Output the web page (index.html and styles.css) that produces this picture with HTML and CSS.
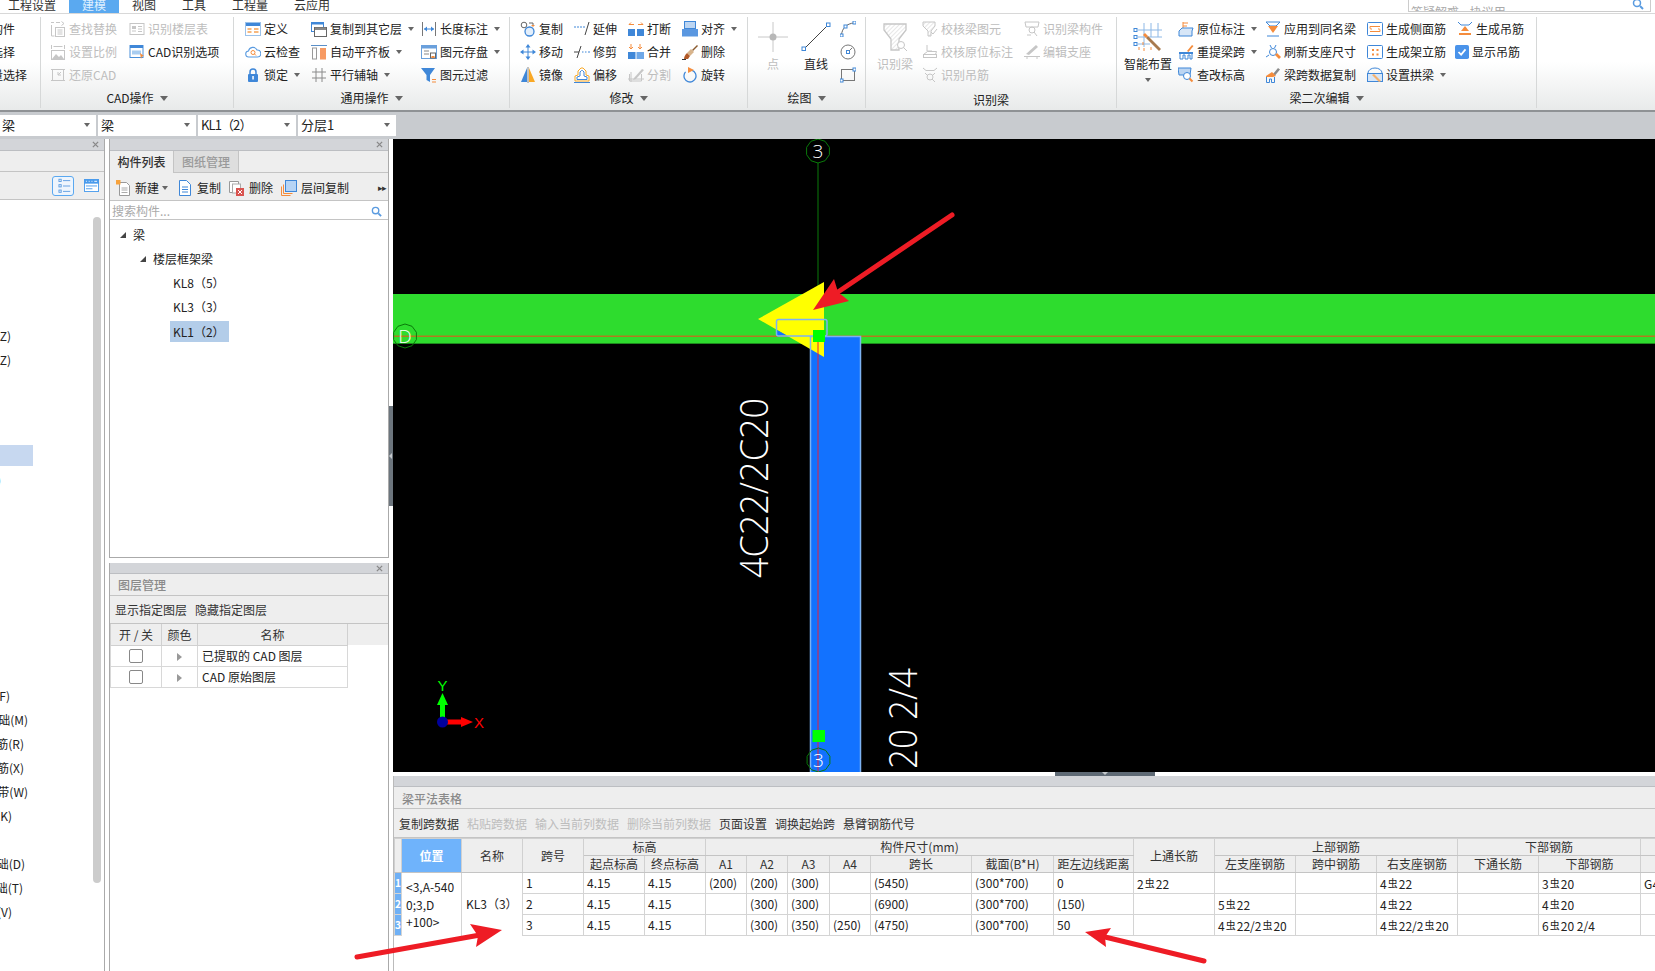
FILE: index.html
```html
<!DOCTYPE html>
<html lang="zh-CN">
<head>
<meta charset="utf-8">
<title>梁平法表格</title>
<link rel="stylesheet" href="styles.css">
</head>
<body>
<svg class="defs" aria-hidden="true">
<defs>
<symbol id="find" viewBox="0 0 16 16"><g fill="none" stroke="#c6c6c6"><path d="M1 1.5h3M6 1.5h4"/><path d="M11.5 .5l2.5 2-2.5 2"/><rect x="5.5" y="6.5" width="9" height="9"/><path d="M7.5 9h5M7.5 11h5M7.5 13h5M1.5 4v11h3"/></g></symbol>
<symbol id="scale" viewBox="0 0 16 16"><g stroke="#c6c6c6" fill="none"><rect x="1.5" y="6.5" width="13" height="9"/><path d="M1.5 1v4M14.5 1v4M3.5 2.5h9"/></g><path d="M2 15l4-5 3 3 2-2 3 4z" fill="#c6c6c6"/></symbol>
<symbol id="restore" viewBox="0 0 16 16"><g stroke="#c6c6c6" fill="none"><rect x="2.5" y="2.5" width="11" height="11"/><path d="M1 2.5h3M12 2.5h3M1 13.5h3M12 13.5h3M11 5l-3 3M8 5v3h3"/></g></symbol>
<symbol id="floor" viewBox="0 0 16 16"><rect x="1" y="2.5" width="14" height="11" fill="#fff" stroke="#c6c6c6"/><rect x="3" y="5" width="4" height="3" fill="#c6c6c6"/><path d="M9 5.500h4M3 10h4M9 8h4M9 10.500h4" stroke="#c6c6c6"/></symbol>
<symbol id="cadopt" viewBox="0 0 16 16"><rect x="1" y="1.500" width="13" height="12" fill="#fff" stroke="#4a90d9"/><rect x="1" y="1" width="13" height="3" fill="#3f87d8"/><rect x="3" y="6.500" width="9" height="4" fill="#a9cdf0"/><path d="M11 9l4 3-2 .5-1 2.500z" fill="#f58c3c"/></symbol>
<symbol id="define" viewBox="0 0 16 16"><rect x=".5" y="1.500" width="15" height="13" fill="#fff" stroke="#9cc2ea"/><rect x="1" y="2" width="14" height="3" fill="#3f87d8"/><path d="M2.500 8h4M2.500 11h4" stroke="#f5a154" stroke-width="1.500"/><path d="M9 8h4.500M9 11h4.500" stroke="#f5a154" stroke-width="1.500"/></symbol>
<symbol id="cloud" viewBox="0 0 16 16"><path d="M4 13a3 3 0 0 1-.5-6A4.500 4.500 0 0 1 12 6a3.500 3.500 0 0 1 .5 7z" fill="#fff" stroke="#5a9be0" stroke-width="1.100"/><circle cx="8" cy="8.500" r="2" fill="none" stroke="#f58c3c"/><path d="M9.500 10l1.500 1.500" stroke="#f58c3c"/></symbol>
<symbol id="lock" viewBox="0 0 16 16"><path d="M5 7V5a3 3 0 0 1 6 0v2" fill="none" stroke="#3f87d8" stroke-width="1.500"/><rect x="3" y="7" width="10" height="8" rx="1" fill="#3f87d8"/><rect x="7.300" y="9" width="1.500" height="3.500" fill="#fff"/></symbol>
<symbol id="copyfloor" viewBox="0 0 16 16"><rect x=".5" y="1.500" width="12" height="9" fill="#fff" stroke="#3f87d8"/><rect x="1" y="1" width="12" height="2.500" fill="#3f87d8"/><rect x="3.500" y="6.500" width="12" height="9" fill="#fff" stroke="#666"/><rect x="4" y="6.500" width="11" height="2.500" fill="#888"/></symbol>
<symbol id="alignb" viewBox="0 0 16 16"><path d="M0 1.500h16" stroke="#5a8fc8"/><rect x="1.500" y="4" width="4" height="11" fill="#fff" stroke="#999"/><rect x="9" y="4" width="6" height="11.500" fill="#f79a63"/></symbol>
<symbol id="par" viewBox="0 0 16 16"><path d="M1 5h14M1 11h14M5 1v14M11 1v14" stroke="#8a8a8a" stroke-width="1" fill="none"/></symbol>
<symbol id="measure" viewBox="0 0 16 16"><path d="M1.500 1v14M14.500 1v14" stroke="#777"/><path d="M3 8h10" stroke="#3f87d8"/><path d="M3 8l3-2.500v5zM13 8l-3-2.500v5z" fill="#3f87d8"/></symbol>
<symbol id="save" viewBox="0 0 16 16"><rect x=".5" y="1.500" width="15" height="13" fill="#fff" stroke="#6aa0dc"/><rect x="1" y="2" width="14" height="2.500" fill="#6aa0dc"/><path d="M3 7h5M3 10h5" stroke="#888"/><rect x="9.500" y="9" width="5" height="5" fill="#fff" stroke="#666"/><rect x="10.500" y="12" width="3" height="2" fill="#f58c3c"/></symbol>
<symbol id="filter" viewBox="0 0 16 16"><path d="M0 1h14L9 8v7L5.500 13V8z" fill="#3f87d8"/><path d="M11 12.500h4M11 15h4" stroke="#f58c3c"/></symbol>
<symbol id="copy" viewBox="0 0 16 16"><circle cx="4" cy="4" r="2.800" fill="#fff" stroke="#666"/><path d="M9 2h4v3" fill="none" stroke="#666"/><path d="M13 6l-2-2h4z" fill="#f58c3c"/><circle cx="9.500" cy="10.500" r="4.500" fill="#e4effb" stroke="#3f87d8" stroke-width="1.300"/></symbol>
<symbol id="move" viewBox="0 0 16 16"><path d="M8 3v10M3 8h10" stroke="#3f87d8"/><path d="M8 0l2.500 3.500h-5zM8 16l2.500-3.500h-5zM0 8l3.500-2.500v5zM16 8l-3.500-2.500v5z" fill="#3f87d8"/></symbol>
<symbol id="mirror" viewBox="0 0 16 16"><path d="M7 1v14H1z" fill="#3f87d8"/><path d="M9 1v14h6z" fill="#f9a825"/><path d="M8 0v16" stroke="#888"/></symbol>
<symbol id="extend" viewBox="0 0 16 16"><path d="M0 6h2M3 6h2M6 6h2M9 6h2" stroke="#3f87d8"/><path d="M11 14L15 1" stroke="#444" fill="none"/></symbol>
<symbol id="trim" viewBox="0 0 16 16"><path d="M0 8h5" stroke="#444"/><path d="M8 8h1.500M11 8h1.500M14 8h2" stroke="#3f87d8"/><path d="M3 14L7 2" stroke="#444"/></symbol>
<symbol id="offset" viewBox="0 0 16 16"><path d="M1 14V9l3-1V4l3-3h2l3 3v4l3 1v5z" fill="#fff" stroke="#f9a825"/><path d="M3 12.500V10l3-1V5l1.500-1.500h1L10 5v4l3 1v2.500z" fill="#fff" stroke="#3f87d8"/><path d="M0 15.500h16" stroke="#3f87d8"/></symbol>
<symbol id="break" viewBox="0 0 16 16"><rect x="0" y="8" width="7" height="7" fill="#3f87d8"/><rect x="9" y="8" width="7" height="7" fill="#3f87d8"/><path d="M1 3.500h5M1 3.500l2-2M10 3.500h5M15 3.500l-2-2" stroke="#f58c3c" fill="none"/></symbol>
<symbol id="merge" viewBox="0 0 16 16"><rect x="0" y="8" width="7.500" height="7" fill="#3f87d8"/><rect x="8.500" y="8" width="7.500" height="7" fill="#6ea8e8"/><path d="M3 0v5M1 3l2 2 2-2M12 0v5M10 3l2 2 2-2" stroke="#f58c3c" fill="none"/></symbol>
<symbol id="split" viewBox="0 0 16 16"><g fill="none" stroke="#c6c6c6"><path d="M1.500 7v7h12V7"/><path d="M0 12h16M3 15V5"/></g><path d="M6 11l8-9 2 1-8 9-3 1z" fill="#c6c6c6"/></symbol>
<symbol id="alignt" viewBox="0 0 16 16"><rect x="2.500" y=".5" width="11" height="7" fill="#bcd5f2" stroke="#3f87d8"/><rect x="0" y="8" width="16" height="7.500" fill="#5a97e0"/></symbol>
<symbol id="del" viewBox="0 0 16 16"><path d="M10 6l5-5 1 1-5 5z" fill="#8a5a2e"/><path d="M9 5l3 3-4 4-3-3z" fill="#d8b48c"/><path d="M5 9l3 3-2 3H2c0-2 1-4 3-6z" fill="#b35a28"/><path d="M0 15.500h4" stroke="#333"/></symbol>
<symbol id="rotate" viewBox="0 0 16 16"><circle cx="8" cy="9" r="6" fill="none" stroke="#3f87d8" stroke-width="1.300" stroke-dasharray="30 4" transform="rotate(-70 8 9)"/><path d="M6 0l6 3-6 3z" fill="#f58c3c"/></symbol>
<symbol id="point" viewBox="0 0 30 30"><path d="M15 0v30M0 15h30" stroke="#c8c8c8" fill="none"/><circle cx="15" cy="15" r="3.500" fill="#b8b8b8"/></symbol>
<symbol id="line" viewBox="0 0 30 30"><path d="M3 27L27 3" stroke="#444"/><rect x="1" y="25" width="3.500" height="3.500" fill="#fff" stroke="#3f87d8"/><rect x="25.500" y="1" width="3.500" height="3.500" fill="#fff" stroke="#3f87d8"/></symbol>
<symbol id="arc" viewBox="0 0 16 16"><path d="M1.500 14C2 7 7 2.500 14 2" fill="none" stroke="#666"/><rect x="0" y="13" width="3" height="3" fill="#fff" stroke="#3f87d8"/><rect x="13" y="0" width="3" height="3" fill="#fff" stroke="#3f87d8"/><rect x="4" y="4" width="3" height="3" fill="#fff" stroke="#3f87d8"/></symbol>
<symbol id="circ" viewBox="0 0 16 16"><circle cx="8" cy="8" r="7" fill="none" stroke="#777"/><rect x="6.500" y="6.500" width="3" height="3" fill="#fff" stroke="#3f87d8"/><path d="M9 7l3-3" stroke="#777"/></symbol>
<symbol id="rect" viewBox="0 0 16 16"><rect x="1.500" y="2.500" width="13" height="11" fill="none" stroke="#777"/><rect x="0" y="12" width="3" height="3" fill="#fff" stroke="#3f87d8"/><rect x="13" y="1" width="3" height="3" fill="#fff" stroke="#3f87d8"/></symbol>
<symbol id="rbeam" viewBox="0 0 30 30"><defs><pattern id="hatch" width="3" height="3" patternUnits="userSpaceOnUse" patternTransform="rotate(-45)"><path d="M0 0h3" stroke="#d0d0d0"/></pattern></defs><path d="M4 2h22v6l-7 9v11h-8V17L4 8z" fill="url(#hatch)" stroke="#c6c6c6" stroke-width="1.300"/><circle cx="21" cy="23" r="3.500" fill="#fff" stroke="#c6c6c6"/><path d="M23.500 25.500L27 29" stroke="#c6c6c6"/></symbol>
<symbol id="chk" viewBox="0 0 16 16"><path d="M1 1h12v4l-4 5v5H6V10L1 5z" fill="url(#hatch)" stroke="#c6c6c6"/><path d="M9 11l2 2 4-5" fill="none" stroke="#c6c6c6"/></symbol>
<symbol id="chk2" viewBox="0 0 16 16"><g fill="none" stroke="#c6c6c6"><path d="M5 1v6h5"/><rect x="1.500" y="10.500" width="13" height="3"/><path d="M1.500 10.500l4-3h9l-1 3"/></g></symbol>
<symbol id="hang" viewBox="0 0 16 16"><g fill="none" stroke="#c6c6c6"><path d="M1 1l3 2.500h8L15 1M3 6l2 2M13 6l-2 2"/><circle cx="8" cy="10" r="3"/><path d="M10 12l3 3"/></g></symbol>
<symbol id="rbar" viewBox="0 0 16 16"><g fill="none" stroke="#c6c6c6"><path d="M1 1h14l-1 5H2z"/><circle cx="8" cy="9" r="3"/><path d="M10 11l3 4"/><path d="M3 14h4"/></g></symbol>
<symbol id="edit" viewBox="0 0 16 16"><path d="M2 10l10-9 2 2L5 11z" fill="#c6c6c6"/><path d="M0 12.500h16M3 15v-2M13 15v-2" stroke="#c6c6c6" fill="none"/></symbol>
<symbol id="smart" viewBox="0 0 30 30"><path d="M5 8h24M5 15h24M5 22h12M11 1v24M18 1v14M25 1v14" stroke="#8db8e6" fill="none"/><rect x="1" y="6.500" width="3" height="3" fill="#fff" stroke="#3f87d8"/><rect x="1" y="13.500" width="3" height="3" fill="#fff" stroke="#3f87d8"/><rect x="1" y="20.500" width="3" height="3" fill="#fff" stroke="#3f87d8"/><path d="M15 14l13 13-2 2-13-13z" fill="#a87a4e"/><path d="M12 11l3 3-2 2-3-3z" fill="#f58c3c"/><path d="M10 20v3M6 25v3M18 25v3M11 26v3" stroke="#f58c3c"/></symbol>
<symbol id="orig" viewBox="0 0 16 16"><path d="M5 1v7M5 2h5M5 5h4" stroke="#f58c3c" fill="none"/><path d="M1 10l3-3h11l-1 3v5H1z" fill="#d7e6f7" stroke="#3f87d8"/></symbol>
<symbol id="respan" viewBox="0 0 16 16"><path d="M9 7l5-6 1.500 1-5 6z" fill="#f58c3c"/><path d="M1 8h14v2H1z" fill="#3f87d8"/><path d="M2 10v5h3v-4h2v4h3v-4h2v4h2v-5" fill="none" stroke="#3f87d8"/></symbol>
<symbol id="elev" viewBox="0 0 16 16"><path d="M0 1h13l-1 7H1z" fill="#bcd5f2" stroke="#3f87d8"/><circle cx="9" cy="9" r="3.500" fill="#fff" stroke="#3f87d8"/><path d="M11.500 11.500l3 3" stroke="#f58c3c" stroke-width="2"/></symbol>
<symbol id="same" viewBox="0 0 16 16"><path d="M1 1h14l-4 4H5z" fill="#fff" stroke="#3f87d8"/><path d="M3 5h10l-5 7z" fill="#f58c3c"/><path d="M2 15h12" stroke="#3f87d8"/></symbol>
<symbol id="refresh" viewBox="0 0 16 16"><g fill="none" stroke="#3f87d8"><circle cx="8" cy="8" r="3.500"/><path d="M5 1l1.500 3M11 1L9.500 4M1 13l3-2M15 13l-3-2"/></g><path d="M10 11l4 4 2-2-4-4z" fill="#f58c3c"/></symbol>
<symbol id="span" viewBox="0 0 16 16"><path d="M8 7l5-6 2 1.500-5 6z" fill="#8a8a8a"/><path d="M1 9l6-4 4 4-3 1H1z" fill="#f58c3c"/><path d="M1.500 10v5.500h3V12h2v3.500h3V10" fill="none" stroke="#3f87d8"/></symbol>
<symbol id="side" viewBox="0 0 16 16"><rect x=".5" y="1.500" width="15" height="13" rx="1" fill="#fff" stroke="#3f87d8"/><path d="M3 5.500h10M3 10.500h10M3 5.500c0 2 0 3 2 2.500M13 10.500c0-2 0-3-2-2.500" fill="none" stroke="#f58c3c"/></symbol>
<symbol id="stand" viewBox="0 0 16 16"><rect x=".5" y="1.500" width="15" height="13" rx="1" fill="#fff" stroke="#3f87d8"/><path d="M5 5h2v2H5zM9.500 5h2v2h-2zM5 9.500h2v2H5zM9.500 9.500h2v2h-2z" fill="#f58c3c"/></symbol>
<symbol id="archb" viewBox="0 0 16 16"><path d="M1 6a7 5 0 0 1 14 0" fill="none" stroke="#3f87d8"/><rect x=".5" y="6.500" width="15" height="8" fill="#d7e6f7" stroke="#3f87d8"/><path d="M5 8l7 7 2-1-7-7z" fill="#f5b06c"/></symbol>
<symbol id="genhang" viewBox="0 0 16 16"><path d="M1 1l3 3h8l3-3" fill="none" stroke="#3f87d8"/><path d="M8 5l4 5H4z" fill="#f58c3c"/><path d="M2 13h12" stroke="#f58c3c" stroke-width="2"/></symbol>
<symbol id="checked" viewBox="0 0 16 16"><rect x="0" y="0" width="16" height="16" rx="2" fill="#4a93ea"/><path d="M4 8l3 3 5-6" fill="none" stroke="#fff" stroke-width="2"/></symbol>
<symbol id="listv" viewBox="0 0 22 20"><g fill="none" stroke="#5a9be0"><rect x="6.500" y="2.500" width="2.500" height="2.500"/><rect x="6.500" y="8.500" width="2.500" height="2.500"/><rect x="6.500" y="14.500" width="2.500" height="2.500"/><path d="M11 4h8M11 10h8M11 16h8"/></g></symbol>
<symbol id="cardv" viewBox="0 0 16 14"><rect x=".5" y=".5" width="15" height="13" fill="#fff" stroke="#4a9bec"/><rect x="0" y="0" width="16" height="5" fill="#4a9bec"/><path d="M2 2.500h1M5 2.500h1M8 2.500h1M11 2.500h3" stroke="#fff"/><path d="M2 7.500h12M2 10.500h7" stroke="#4a9bec"/></symbol>
<symbol id="new" viewBox="0 0 16 16"><path d="M3.500 2.500h7l3 3v10h-10z" fill="#fff" stroke="#999"/><path d="M5.500 8h6M5.500 10h6M5.500 12.500h6" stroke="#aaa"/><rect x="0" y="0" width="4.500" height="4.500" fill="#f7a23c"/></symbol>
<symbol id="dup" viewBox="0 0 16 16"><path d="M2.500 .5h7l4 4v11h-11z" fill="#fff" stroke="#3f87d8"/><path d="M5 7h6M5 9.500h6M5 12h6" stroke="#3f87d8"/></symbol>
<symbol id="remove" viewBox="0 0 16 16"><path d="M.5 1.500h9v11h-9z" fill="#fff" stroke="#999"/><rect x="3.500" y="4" width="8" height="9" fill="#fff" stroke="#aaa"/><rect x="7" y="8" width="8" height="8" fill="#d9534f"/><path d="M9 10l4 4M13 10l-4 4" stroke="#fff"/></symbol>
<symbol id="levelcopy" viewBox="0 0 16 16"><path d="M.5 15.500v-9M.5 15.500h9" stroke="#f58c3c" fill="none"/><path d="M2.500 13.500v-9M2.500 13.500h9" stroke="#f58c3c" fill="none"/><rect x="4.500" y=".5" width="11" height="11" fill="#b6d4f5" stroke="#3f87d8"/></symbol>
<symbol id="mag" viewBox="0 0 12 12"><circle cx="5" cy="5" r="3.500" fill="none" stroke="#5a9be0" stroke-width="1.500"/><path d="M8 8l3 3" stroke="#5a9be0" stroke-width="2"/></symbol>
<symbol id="cross" viewBox="0 0 8 8"><path d="M1 1l6 6M7 1L1 7" stroke="#888" stroke-width="1.500"/></symbol>
</defs>
</svg>

<div class="app">
  <nav class="menu">
    <span class="mi">工程设置</span><span class="mi on">建模</span><span class="mi">视图</span><span class="mi">工具</span><span class="mi">工程量</span><span class="mi">云应用</span>
    <div class="topsearch"><span>答疑解惑 协议用</span><svg class="topmag"><use href="#mag"/></svg></div>
  </nav>

  <section class="ribbon">
    <div class="grp g0">
      <div class="body">
        <div class="clip">
          <div class="cl e15"><span>构件</span></div>
          <div class="cl e15"><span>选择</span></div>
          <div class="cl e27"><span>批量选择</span></div>
        </div>
      </div>
    </div>

    <div class="grp g1">
      <div class="body"><div class="cols">
        <div class="it off"><svg class="ic"><use href="#find"/></svg><span>查找替换</span></div>
        <div class="it off"><svg class="ic"><use href="#scale"/></svg><span>设置比例</span></div>
        <div class="it off"><svg class="ic"><use href="#restore"/></svg><span>还原CAD</span></div>
        <div class="it off"><svg class="ic"><use href="#floor"/></svg><span>识别楼层表</span></div>
        <div class="it"><svg class="ic"><use href="#cadopt"/></svg><span>CAD识别选项</span></div>
      </div></div>
      <div class="lab">CAD操作<b class="caret big-c"></b></div>
    </div>

    <div class="grp g2">
      <div class="body"><div class="cols">
        <div class="it"><svg class="ic"><use href="#define"/></svg><span>定义</span></div>
        <div class="it"><svg class="ic"><use href="#cloud"/></svg><span>云检查</span></div>
        <div class="it"><svg class="ic"><use href="#lock"/></svg><span>锁定</span><b class="caret"></b></div>
        <div class="it"><svg class="ic"><use href="#copyfloor"/></svg><span>复制到其它层</span><b class="caret"></b></div>
        <div class="it"><svg class="ic"><use href="#alignb"/></svg><span>自动平齐板</span><b class="caret"></b></div>
        <div class="it"><svg class="ic"><use href="#par"/></svg><span>平行辅轴</span><b class="caret"></b></div>
        <div class="it"><svg class="ic"><use href="#measure"/></svg><span>长度标注</span><b class="caret"></b></div>
        <div class="it"><svg class="ic"><use href="#save"/></svg><span>图元存盘</span><b class="caret"></b></div>
        <div class="it"><svg class="ic"><use href="#filter"/></svg><span>图元过滤</span></div>
      </div></div>
      <div class="lab">通用操作<b class="caret big-c"></b></div>
    </div>

    <div class="grp g3">
      <div class="body"><div class="cols">
        <div class="it"><svg class="ic"><use href="#copy"/></svg><span>复制</span></div>
        <div class="it"><svg class="ic"><use href="#move"/></svg><span>移动</span></div>
        <div class="it"><svg class="ic"><use href="#mirror"/></svg><span>镜像</span></div>
        <div class="it"><svg class="ic"><use href="#extend"/></svg><span>延伸</span></div>
        <div class="it"><svg class="ic"><use href="#trim"/></svg><span>修剪</span></div>
        <div class="it"><svg class="ic"><use href="#offset"/></svg><span>偏移</span></div>
        <div class="it"><svg class="ic"><use href="#break"/></svg><span>打断</span></div>
        <div class="it"><svg class="ic"><use href="#merge"/></svg><span>合并</span></div>
        <div class="it off"><svg class="ic"><use href="#split"/></svg><span>分割</span></div>
        <div class="it"><svg class="ic"><use href="#alignt"/></svg><span>对齐</span><b class="caret"></b></div>
        <div class="it"><svg class="ic"><use href="#del"/></svg><span>删除</span></div>
        <div class="it"><svg class="ic"><use href="#rotate"/></svg><span>旋转</span></div>
      </div></div>
      <div class="lab">修改<b class="caret big-c"></b></div>
    </div>

    <div class="grp g4">
      <div class="body">
        <div class="bigbtn off"><svg class="ic30"><use href="#point"/></svg><span>点</span></div>
        <div class="bigbtn"><svg class="ic30"><use href="#line"/></svg><span>直线</span></div>
        <div class="stack">
          <svg class="ic"><use href="#arc"/></svg>
          <svg class="ic"><use href="#circ"/></svg>
          <svg class="ic"><use href="#rect"/></svg>
        </div>
      </div>
      <div class="lab">绘图<b class="caret big-c"></b></div>
    </div>

    <div class="grp g5">
      <div class="body">
        <div class="bigbtn off"><svg class="ic30"><use href="#rbeam"/></svg><span>识别梁</span></div>
        <div class="cols">
          <div class="it off"><svg class="ic"><use href="#chk"/></svg><span>校核梁图元</span></div>
          <div class="it off"><svg class="ic"><use href="#chk2"/></svg><span>校核原位标注</span></div>
          <div class="it off"><svg class="ic"><use href="#hang"/></svg><span>识别吊筋</span></div>
          <div class="it off"><svg class="ic"><use href="#rbar"/></svg><span>识别梁构件</span></div>
          <div class="it off"><svg class="ic"><use href="#edit"/></svg><span>编辑支座</span></div>
        </div>
      </div>
      <div class="lab low">识别梁</div>
    </div>

    <div class="grp g6">
      <div class="body">
        <div class="bigbtn wide"><svg class="ic30"><use href="#smart"/></svg><span>智能布置</span><b class="caret"></b></div>
        <div class="cols">
          <div class="it"><svg class="ic"><use href="#orig"/></svg><span>原位标注</span><b class="caret"></b></div>
          <div class="it"><svg class="ic"><use href="#respan"/></svg><span>重提梁跨</span><b class="caret"></b></div>
          <div class="it"><svg class="ic"><use href="#elev"/></svg><span>查改标高</span></div>
          <div class="it"><svg class="ic"><use href="#same"/></svg><span>应用到同名梁</span></div>
          <div class="it"><svg class="ic"><use href="#refresh"/></svg><span>刷新支座尺寸</span></div>
          <div class="it"><svg class="ic"><use href="#span"/></svg><span>梁跨数据复制</span></div>
          <div class="it"><svg class="ic"><use href="#side"/></svg><span>生成侧面筋</span></div>
          <div class="it"><svg class="ic"><use href="#stand"/></svg><span>生成架立筋</span></div>
          <div class="it"><svg class="ic"><use href="#archb"/></svg><span>设置拱梁</span><b class="caret"></b></div>
          <div class="it"><svg class="ic"><use href="#genhang"/></svg><span>生成吊筋</span></div>
          <div class="it chkit"><svg class="ic14"><use href="#checked"/></svg><span>显示吊筋</span></div>
        </div>
      </div>
      <div class="lab">梁二次编辑<b class="caret big-c"></b></div>
    </div>
  </section>

  <div class="selbar">
    <div class="sel s1"><span>梁</span><b class="caret"></b></div>
    <div class="sel"><span>梁</span><b class="caret"></b></div>
    <div class="sel"><span class="kl">KL1（2）</span><b class="caret"></b></div>
    <div class="sel"><span>分层1</span><b class="caret"></b></div>
  </div>

  <main class="main">
    <aside class="p1">
      <div class="phd"><svg class="x"><use href="#cross"/></svg></div>
      <div class="p1r1"></div>
      <div class="p1r2">
        <div class="viewbtn"><svg class="lv"><use href="#listv"/></svg></div>
        <svg class="cv"><use href="#cardv"/></svg>
      </div>
      <div class="p1body">
        <div class="llist">
          <div class="lrow"></div><div class="lrow"></div><div class="lrow"></div><div class="lrow"></div><div class="lrow"></div>
          <div class="lrow e11"><span>构造柱(Z)</span></div>
          <div class="lrow e11"><span>砌体柱(Z)</span></div>
          <div class="lrow"></div><div class="lrow"></div><div class="lrow"></div>
          <div class="lrow hl"></div>
          <div class="lrow e1"><span>过梁(G)</span></div>
          <div class="lrow"></div><div class="lrow"></div><div class="lrow"></div><div class="lrow"></div><div class="lrow"></div><div class="lrow"></div><div class="lrow"></div><div class="lrow"></div>
          <div class="lrow e10"><span>基础梁(F)</span></div>
          <div class="lrow e28"><span>筏板基础(M)</span></div>
          <div class="lrow e24"><span>筏板主筋(R)</span></div>
          <div class="lrow e24"><span>筏板负筋(X)</span></div>
          <div class="lrow e28"><span>基础板带(W)</span></div>
          <div class="lrow e12"><span>集水坑(K)</span></div>
          <div class="lrow"></div>
          <div class="lrow e25"><span>独立基础(D)</span></div>
          <div class="lrow e23"><span>条形基础(T)</span></div>
          <div class="lrow e12"><span>桩承台(V)</span></div>
        </div>
        <div class="vscroll"></div>
      </div>
    </aside>

    <div class="midcol">
      <section class="p2">
        <div class="phd"><svg class="x"><use href="#cross"/></svg></div>
        <div class="tabs"><div class="tab on">构件列表</div><div class="tab">图纸管理</div></div>
        <div class="tools">
          <svg class="ic"><use href="#new"/></svg><span class="t t1">新建</span><b class="caret"></b>
          <svg class="ic m1"><use href="#dup"/></svg><span class="t t2">复制</span>
          <svg class="ic m2"><use href="#remove"/></svg><span class="t t2">删除</span>
          <svg class="ic m2"><use href="#levelcopy"/></svg><span class="t t2">层间复制</span>
          <span class="more">▸▸</span>
        </div>
        <div class="search"><span>搜索构件...</span><svg class="smag"><use href="#mag"/></svg></div>
        <div class="tree">
          <div class="tn l0"><b class="tri"></b><span>梁</span></div>
          <div class="tn l1"><b class="tri"></b><span>楼层框架梁</span></div>
          <div class="tn l2"><span>KL8（5）</span></div>
          <div class="tn l2"><span>KL3（3）</span></div>
          <div class="tn l2"><span class="sel-n">KL1（2）</span></div>
        </div>
      </section>
      <section class="p3">
        <div class="phd thin"><svg class="x"><use href="#cross"/></svg></div>
        <div class="ttl">图层管理</div>
        <div class="btns"><span>显示指定图层</span><span>隐藏指定图层</span></div>
        <table class="layers">
          <colgroup><col class="lc1"><col class="lc2"><col class="lc3"><col></colgroup>
          <tr><th>开 / 关</th><th>颜色</th><th>名称</th><th class="blank"></th></tr>
          <tr><td class="c"><i class="cb"></i></td><td class="c"><i class="tr"></i></td><td>已提取的 CAD 图层</td><td class="none"></td></tr>
          <tr><td class="c"><i class="cb"></i></td><td class="c"><i class="tr"></i></td><td>CAD 原始图层</td><td class="none"></td></tr>
        </table>
      </section>
    </div>

    <div class="split"><i></i></div>

    <div class="rightcol">
      <div class="canvas">
        <svg class="draw" viewBox="393 139 1262 633" aria-label="CAD 绘图区">
          <rect x="393" y="294" width="1262" height="50" fill="#2edc2e"/>
          <rect x="393" y="343" width="1262" height="1" fill="#1d8a1d"/>
          <path d="M818 163V294" stroke="#0a7a0a" fill="none"/>
          <rect x="393" y="335.500" width="1262" height="1.500" fill="#b27a20"/>
          <rect x="810" y="336" width="50.500" height="436" fill="#1272ff"/>
          <polygon points="758,319 824,282 824,357" fill="#ffff00"/>
          <polygon points="777,330 777,335 786,335" fill="#1272ff"/>
          <path d="M810.500 772V336.500H860.500V772" fill="none" stroke="#7db2f2" stroke-width="1.500"/>
          <rect x="776.500" y="319.500" width="50.500" height="16.500" rx="2" fill="none" stroke="#7db2f2" stroke-width="1.500"/>
          <path d="M818 342V772" stroke="#e8203a" stroke-width="1"/>
          <rect x="813" y="330" width="12" height="12" fill="#00ff00"/>
          <rect x="812.500" y="730" width="12.500" height="12" fill="#00ff00"/>
          <g class="bub"><polygon transform="translate(818 151)" points="11.400,3.700 7.050,9.700 0,12 -7.050,9.700 -11.400,3.700 -11.400,-3.700 -7.050,-9.700 0,-12 7.050,-9.700 11.400,-3.700"/><text x="818" y="158">3</text></g>
          <g class="bub"><polygon transform="translate(818.500 760)" points="11.400,3.700 7.050,9.700 0,12 -7.050,9.700 -11.400,3.700 -11.400,-3.700 -7.050,-9.700 0,-12 7.050,-9.700 11.400,-3.700"/><text x="818.500" y="767">3</text></g>
          <g class="bub"><polygon transform="translate(405 336)" points="11.400,3.700 7.050,9.700 0,12 -7.050,9.700 -11.400,3.700 -11.400,-3.700 -7.050,-9.700 0,-12 7.050,-9.700 11.400,-3.700"/><text x="405" y="343">D</text></g>
          <text class="cadt" transform="translate(768 578) rotate(-90)" textLength="180" lengthAdjust="spacingAndGlyphs">4C22/2C20</text>
          <text class="cadt" transform="translate(917 769) rotate(-90)" textLength="101" lengthAdjust="spacingAndGlyphs">20 2/4</text>
          <rect x="440" y="703" width="5" height="19" fill="#00ff00"/>
          <polygon points="442.500,693 437,705 448,705" fill="#00ff00"/>
          <rect x="442" y="719.500" width="20" height="5" fill="#ff0000"/>
          <polygon points="473,722 461,717 461,727" fill="#ff0000"/>
          <circle cx="442.500" cy="722" r="5.500" fill="#00009c"/>
          <text class="axy" x="442.500" y="691">Y</text>
          <text class="axx" x="479" y="728">X</text>
        </svg>
        <div class="handle"></div>
      </div>
      <section class="p4">
        <div class="phd thin"></div>
        <div class="ttl t4">梁平法表格</div>
        <div class="btns b4">
          <span>复制跨数据</span><span class="off">粘贴跨数据</span><span class="off">输入当前列数据</span><span class="off">删除当前列数据</span><span>页面设置</span><span>调换起始跨</span><span>悬臂钢筋代号</span>
        </div>
        <div class="gridwrap">
          <table class="grid">
            <colgroup>
              <col class="w7"><col class="w60"><col class="w61"><col class="w61"><col class="w61"><col class="w61">
              <col class="w41"><col class="w41"><col class="w42"><col class="w41"><col class="w101"><col class="w82"><col class="w80">
              <col class="w81"><col class="w81"><col class="w81"><col class="w81"><col class="w81"><col class="w102"><col class="w100">
            </colgroup>
            <tr class="h">
              <th rowspan="2"></th><th rowspan="2" class="pos">位置</th><th rowspan="2">名称</th><th rowspan="2">跨号</th>
              <th colspan="2">标高</th><th colspan="7">构件尺寸(mm)</th><th rowspan="2">上通长筋</th>
              <th colspan="3">上部钢筋</th><th colspan="2">下部钢筋</th><th>侧面钢筋</th>
            </tr>
            <tr class="h">
              <th>起点标高</th><th>终点标高</th><th>A1</th><th>A2</th><th>A3</th><th>A4</th><th>跨长</th><th>截面(B*H)</th><th>距左边线距离</th>
              <th>左支座钢筋</th><th>跨中钢筋</th><th>右支座钢筋</th><th>下通长筋</th><th>下部钢筋</th><th>侧面通长筋</th>
            </tr>
            <tr>
              <td class="rh">1</td>
              <td rowspan="3" class="poscell">&lt;3,A-540<br>0;3,D<br>+100&gt;</td>
              <td rowspan="3" class="namecell">KL3（3）</td>
              <td>1</td><td>4.15</td><td>4.15</td><td>(200)</td><td>(200)</td><td>(300)</td><td></td><td>(5450)</td><td>(300*700)</td><td>0</td>
              <td>2<i class="rb">虫</i>22</td><td></td><td></td><td>4<i class="rb">虫</i>22</td><td></td><td>3<i class="rb">虫</i>20</td><td>G4<i class="rb">虫</i>12</td>
            </tr>
            <tr>
              <td class="rh">2</td>
              <td>2</td><td>4.15</td><td>4.15</td><td></td><td>(300)</td><td>(300)</td><td></td><td>(6900)</td><td>(300*700)</td><td>(150)</td>
              <td></td><td>5<i class="rb">虫</i>22</td><td></td><td>4<i class="rb">虫</i>22</td><td></td><td>4<i class="rb">虫</i>20</td><td></td>
            </tr>
            <tr>
              <td class="rh">3</td>
              <td>3</td><td>4.15</td><td>4.15</td><td></td><td>(300)</td><td>(350)</td><td>(250)</td><td>(4750)</td><td>(300*700)</td><td>50</td>
              <td></td><td>4<i class="rb">虫</i>22/2<i class="rb">虫</i>20</td><td></td><td>4<i class="rb">虫</i>22/2<i class="rb">虫</i>20</td><td></td><td>6<i class="rb">虫</i>20 2/4</td><td></td>
            </tr>
          </table>
        </div>
      </section>
    </div>
  </main>

  <svg class="notes" viewBox="0 0 1655 971" aria-hidden="true">
    <g class="red">
      <path d="M952 215L838 292"/><polygon points="813,310 834,279 838,292 849,301"/>
      <path d="M357 957L480 935"/><polygon points="502,930 470,924 478,936 476,947"/>
      <path d="M1204 961L1105 937"/><polygon points="1085,932 1111,928 1105,937 1106,947"/>
    </g>
  </svg>
</div>
</body>
</html>
```

FILE: styles.css
```css
* { box-sizing: border-box; }
html, body { margin: 0; padding: 0; background: #fff; }
body { font: 12px/16px "Noto Sans CJK SC", "Noto Sans", sans-serif; color: #222; overflow: hidden; }
.defs { position: absolute; width: 0; height: 0; }
.app { position: relative; width: 1655px; height: 971px; overflow: hidden; display: flex; flex-direction: column; }

/* top menu */
.menu { height: 14px; flex: none; display: flex; border-bottom: 1px solid #d8d8d8; padding-left: 0; margin-left: -5px; overflow: hidden; line-height: 9px; color: #333; }
.mi { padding: 0 13px; height: 13px; white-space: nowrap; }
.mi.on { background: #5aa9f0; color: #dff0ff; }
.topsearch { margin-left: auto; margin-right: 4px; width: 243px; height: 12px; border: 1px solid #ccc; border-top: 0; display: flex; justify-content: space-between; padding: 5px 6px 0 2px; color: #aaa; line-height: 14px; overflow: hidden; word-spacing: 8px; }
.topmag { width: 12px; height: 12px; margin-top: -7px; }

/* ribbon */
.ribbon { height: 98px; flex: none; display: flex; background: linear-gradient(#fff 0, #fff 50%, #e8eaea 100%); border-bottom: 2px solid #8f9295; }
.grp { display: flex; flex-direction: column; flex: none; margin-top: 3px; height: 91px; border-right: 1px solid #d6d8d8; }
.body { display: flex; height: 71px; }
.lab { height: 20px; line-height: 20px; text-align: center; color: #222; display: flex; justify-content: center; align-items: center; }
.lab.low { padding-top: 3px; }
.cols { display: grid; grid-auto-flow: column; grid-template-rows: repeat(3, 23px); justify-content: start; }
.it { display: flex; align-items: center; gap: 3px; white-space: nowrap; color: #222; }
.off, .it.off span { color: #bdbdbd; }
.ic { width: 16px; height: 16px; flex: none; }
.ic14 { width: 14px; height: 14px; flex: none; }
.ic30 { width: 30px; height: 30px; flex: none; margin-top: 4.500px; }
.caret { display: inline-block; flex: none; width: 0; height: 0; border: 3px solid transparent; border-top: 4px solid #666; border-bottom: 0; margin-left: 3px; }
.caret.big-c { border-left-width: 4px; border-right-width: 4px; border-top-width: 5px; margin-left: 6px; }
.bigbtn { display: flex; flex-direction: column; align-items: center; flex: none; width: 40px; line-height: 23px; }
.bigbtn.wide { width: 48px; }
.bigbtn.wide .caret { margin: 3px 0 0; }
.stack { display: flex; flex-direction: column; gap: 7px; padding-top: 3.500px; }

.g0 { width: 41px; }
.clip { width: 40px; display: flex; flex-direction: column; }
.cl { height: 23px; line-height: 23px; display: flex; justify-content: flex-end; overflow: hidden; white-space: nowrap; }
.cl span { flex: none; }
.cl.e15 { padding-right: 25px; }
.cl.e27 { padding-right: 13px; }

.g1 { width: 193px; }
.g1 .cols { padding-left: 9px; grid-template-columns: 79px auto; }
.g2 { width: 276px; }
.g2 .cols { padding-left: 11px; grid-template-columns: 66px 110px auto; }
.g3 { width: 238px; }
.g3 .cols { padding-left: 10px; grid-template-columns: 54px 54px 54px auto; }
.g4 { width: 118px; }
.g4 .body { padding-left: 5px; gap: 3px; }
.g4 .stack { margin-left: 1px; }
.g5 { width: 251px; }
.g5 .body { padding-left: 9px; gap: 7px; }
.g5 .cols { grid-template-columns: 102px auto; }
.g6 { width: 420px; }
.g6 .body { padding-left: 7px; gap: 6px; }
.g6 .cols { grid-template-columns: 87px 102px 90px auto; }
.chkit { margin-left: -2px; }

/* selector bar */
.selbar { height: 27px; flex: none; background: #c8cbcf; padding-top: 3px; display: flex; gap: 2px; align-items: flex-start; }
.sel { width: 98px; height: 21px; background: #fff; display: flex; align-items: center; justify-content: space-between; padding: 0 6px 1px 3px; font-size: 13px; }
.sel.s1 { width: 96px; padding-left: 2px; }
.sel .caret { margin: 0; }
.kl { letter-spacing: -.9px; }

/* layout */
.main { flex: 1; display: flex; min-height: 0; }
.phd { height: 12px; flex: none; background: #d3d5d9; border-bottom: 1px solid #bcbec2; display: flex; justify-content: flex-end; align-items: center; padding-right: 5px; }
.phd.thin { height: 11px; }
.x { width: 7px; height: 7px; }

.p1 { width: 105px; flex: none; margin-right: 4px; border-right: 1px solid #aaa; display: flex; flex-direction: column; }
.p1r1 { height: 21px; flex: none; background: #eee; border-bottom: 1px solid #c4c4c4; }
.p1r2 { height: 28px; flex: none; background: #eee; border-bottom: 1px solid #c4c4c4; display: flex; align-items: center; padding-left: 52px; gap: 10px; }
.viewbtn { width: 22px; height: 20px; border: 1px solid #5aa8f0; border-radius: 3px; background: #eef5fd; display: flex; }
.lv { width: 20px; height: 18px; }
.cv { width: 15px; height: 13px; }
.p1body { flex: 1; display: flex; min-height: 0; overflow: hidden; }
.llist { width: 93px; flex: none; padding-top: 4.500px; }
.lrow { width: 33px; height: 21px; margin-bottom: 3px; line-height: 21px; display: flex; justify-content: flex-end; overflow: hidden; white-space: nowrap; }
.lrow span { flex: none; }
.lrow.hl { background: #c7d8f0; }
.lrow.e1 { padding-right: 32px; }
.lrow.e10 { padding-right: 23px; }
.lrow.e11 { padding-right: 22px; }
.lrow.e12 { padding-right: 21px; }
.lrow.e23 { padding-right: 10px; }
.lrow.e24 { padding-right: 9px; }
.lrow.e25 { padding-right: 8px; }
.lrow.e28 { padding-right: 5px; }
.vscroll { width: 8px; height: 666px; margin-top: 17px; background: #ccc; border-radius: 4px; flex: none; }

.midcol { width: 280px; flex: none; display: flex; flex-direction: column; gap: 5px; }
.p2 { height: 419px; flex: none; border: 1px solid #aaa; border-width: 0 1px 1px; display: flex; flex-direction: column; }
.p3 { flex: 1; border: 1px solid #aaa; border-width: 0 1px; display: flex; flex-direction: column; }
.tabs { height: 22px; flex: none; background: #eee; border-bottom: 1px solid #c4c4c4; display: flex; }
.tab { width: 65px; text-align: center; line-height: 21px; font-weight: 500; color: #9a9a9a; background: #dedede; border-right: 1px solid #c4c4c4; height: 22px; border-bottom: 1px solid #c4c4c4; }
.tab.on { background: #eee; color: #333; width: 64px; border-bottom: 0; }
.tools { height: 28px; flex: none; background: #eee; border-bottom: 1px solid #c4c4c4; display: flex; align-items: center; padding: 2px 0 0 6px; }
.t { white-space: nowrap; }
.t1 { margin-left: 3px; }
.t2 { margin-left: 4px; }
.m1 { margin-left: 9px; }
.m2 { margin-left: 8px; }
.more { margin-left: auto; margin-right: 2px; font-size: 9px; letter-spacing: -1px; color: #333; }
.search { height: 19px; flex: none; border-bottom: 1px solid #c4c4c4; display: flex; justify-content: space-between; align-items: center; padding: 2px 6px 0 2px; color: #aaa; }
.smag { width: 11px; height: 11px; }
.tree { flex: 1; padding-top: 3px; }
.tn { height: 24px; display: flex; align-items: center; white-space: nowrap; }
.tn.l0 { padding-left: 10px; }
.tn.l1 { padding-left: 30px; }
.tn.l2 { padding-left: 63px; }
.tri { width: 0; height: 0; border-style: solid; border-width: 0 0 6px 6px; border-color: transparent transparent #444 transparent; margin-right: 7px; }
.sel-n { display: block; width: 59px; height: 21px; background: #b3cde9; line-height: 21px; padding-left: 3px; margin-left: -3px; }

.ttl { height: 22px; flex: none; background: #eee; border-bottom: 1px solid #c4c4c4; line-height: 21px; padding-left: 8px; color: #8a8a8a; font-weight: 500; }
.btns { height: 28px; flex: none; background: #eee; border-bottom: 1px solid #c4c4c4; display: flex; align-items: center; gap: 8px; padding: 1px 0 0 5px; color: #333; }
.layers { border-collapse: collapse; table-layout: fixed; width: 278px; flex: none; }
.lc1 { width: 51px; }
.lc2 { width: 36px; }
.lc3 { width: 150px; }
.layers th { height: 21px; padding: 1px 0 0; background: #eee; border: 1px solid #d0d0d0; font-weight: 400; color: #333; border-top: 0; line-height: 14px; }
.layers th.blank { border: 0; border-left: 1px solid #d0d0d0; }
.layers td { height: 21px; padding: 0 0 0 4px; border: 1px solid #d8d8d8; line-height: 14px; }
.layers td.none { border: 0; border-left: 1px solid #d8d8d8; }
.layers td.c { padding: 0; text-align: center; }
.cb { display: inline-block; width: 14px; height: 14px; border: 1px solid #888; border-radius: 2px; vertical-align: middle; background: #fff; }
.tr { display: inline-block; width: 0; height: 0; border-style: solid; border-width: 4px 0 4px 5px; border-color: transparent transparent transparent #999; vertical-align: middle; }

.split { width: 4px; flex: none; }
.split i { display: flex; align-items: center; justify-content: flex-start; width: 4px; height: 100px; margin-top: 267px; background: #6c757d; }
.split i::after { content: ""; width: 0; height: 0; border-style: solid; border-width: 3px 3px 3px 0; border-color: transparent #c4c8cc transparent transparent; }

.rightcol { flex: 1; display: flex; flex-direction: column; min-width: 0; }
.canvas { position: relative; height: 633px; flex: none; background: #000; margin-bottom: 4px; }
.draw { display: block; width: 1262px; height: 633px; }
.bub polygon { fill: none; stroke: #0a7a0a; stroke-width: 1; }
.bub text { fill: #fff; font: 300 19px "Open Sans", sans-serif; text-anchor: middle; }
.cadt { fill: #fff; font: 300 39px "Open Sans", sans-serif; }
.axy { fill: #00ff00; font: 400 15px "Liberation Sans", sans-serif; text-anchor: middle; }
.axx { fill: #ff0000; font: 400 15px "Liberation Sans", sans-serif; text-anchor: middle; }
.handle { position: absolute; left: 662px; top: 633px; width: 100px; height: 4px; background: #5f6a75; display: flex; justify-content: center; }
.handle::after { content: ""; width: 0; height: 0; border-style: solid; border-width: 3px 3px 0; border-color: #c4c8cc transparent transparent; }

.p4 { flex: 1; border-left: 1px solid #bbb; display: flex; flex-direction: column; min-height: 0; }
.t4 { padding-left: 8px; line-height: 23px; }
.b4 { height: 29px; padding: 1px 0 0 5px; gap: 8px; }
.b4 .off { color: #bdbdbd; }
.gridwrap { flex: 1; overflow: hidden; }
.grid { border-collapse: collapse; table-layout: fixed; width: 1346px; }
.w7 { width: 7px; } .w60 { width: 60px; } .w61 { width: 61px; } .w41 { width: 41px; } .w42 { width: 42px; }
.w101 { width: 101px; } .w82 { width: 82px; } .w80 { width: 80px; } .w81 { width: 81px; } .w102 { width: 102px; } .w100 { width: 100px; }
.grid th { height: 17px; padding: 0; background: #eee; border: 1px solid #d0d0d0; border-bottom-color: #c4c4c4; font-weight: 400; line-height: 14px; color: #333; white-space: nowrap; overflow: hidden; }
.grid td { height: 21px; padding: 0 0 0 3px; border: 1px solid #d4d4d4; line-height: 14px; white-space: nowrap; overflow: hidden; }
.grid th.pos { background: #6fb3fb; color: #fff; font-weight: 700; }
.grid td.rh { background: #6fb0f5; color: #fff; padding: 0; text-align: center; font-weight: 700; font-size: 10px; }
.grid td.poscell { line-height: 17.500px; border-bottom: 0; padding-left: 4px; }
.grid td.namecell { border-bottom: 0; padding-left: 4px; }
.rb { font-style: normal; font-size: 10px; vertical-align: 2px; margin: 0 1px; }

/* annotations over the whole picture */
.notes { position: absolute; left: 0; top: 0; width: 1655px; height: 971px; pointer-events: none; }
.red path { stroke: #ee1c25; stroke-width: 5px; stroke-linecap: round; fill: none; }
.red polygon { fill: #ee1c25; }
```
